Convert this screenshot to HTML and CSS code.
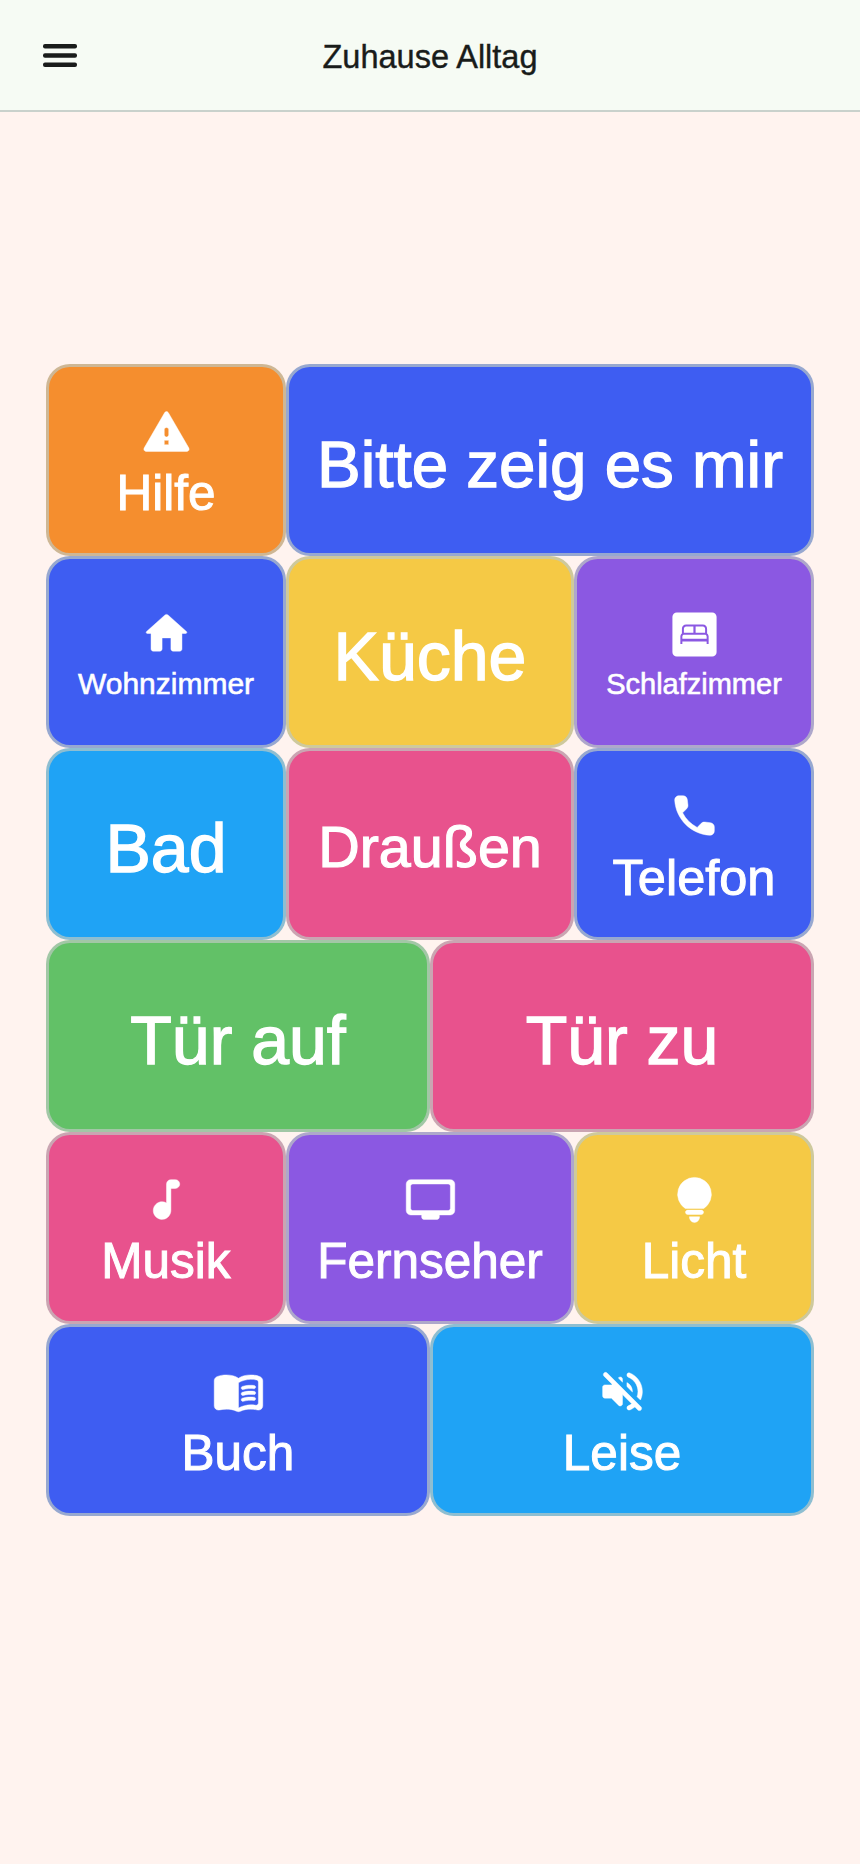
FILE: index.html
```html
<!DOCTYPE html>
<html lang="de">

<head>
  <meta charset="UTF-8">
  <meta name="viewport" content="width=device-width, initial-scale=1.0">
  <title>Zuhause Alltag</title>
  <link rel="stylesheet" href="styles.css">
</head>

<body>
  <header class="topbar">
    <button type="button" class="topbar__menu" aria-label="Menü">
      <svg viewBox="0 0 34 23"><rect width="34" height="4.500" rx="2"/><rect y="9.250" width="34" height="4.500" rx="2"/><rect y="18.500" width="34" height="4.500" rx="2"/></svg>
    </button>
    <h1 class="topbar__title">Zuhause Alltag</h1>
  </header>

  <main class="board">
    <button type="button" class="tile tile--orange span-5">
      <svg viewBox="0 0 24 24"><path d="M2.730 21h18.530c.770 0 1.250-.830.870-1.500l-9.270-16c-.390-.670-1.350-.670-1.730 0l-9.270 16c-.380.670.100 1.500.870 1.500zM13 18h-2v-2h2v2zm-1-3.500c-.550 0-1-.450-1-1v-2.300c0-.550.450-1 1-1s1 .450 1 1v2.300c0 .550-.450 1-1 1z"/></svg>
      <span>Hilfe</span>
    </button>
    <button type="button" class="tile tile--blue span-11 label-wide"><span>Bitte zeig es mir</span></button>

    <button type="button" class="tile tile--blue span-5 label-sm">
      <svg viewBox="0 0 24 24"><path d="M10 19v-5h4v5c0 .550.450 1 1 1h3c.550 0 1-.450 1-1v-7h1.700c.460 0 .680-.570.330-.870L12.670 3.600c-.380-.340-.960-.340-1.340 0l-8.360 7.530c-.340.300-.130.870.330.870H5v7c0 .550.450 1 1 1h3c.550 0 1-.450 1-1z"/></svg>
      <span>Wohnzimmer</span>
    </button>
    <button type="button" class="tile tile--yellow span-6 label-xl"><span>Küche</span></button>
    <button type="button" class="tile tile--purple span-5 label-xs">
      <svg class="icon-cut" viewBox="0 0 24 24"><path fill-rule="evenodd" d="M4 2h16c1.100 0 2 .900 2 2v16c0 1.100-.900 2-2 2H4c-1.100 0-2-.900-2-2V4c0-1.100.900-2 2-2zM8.200 7.500c-1.100 0-1.900.800-1.900 1.900v2.100c-.400.300-.700.800-.700 1.400v3.400h.900v-1.100h11v1.100h.900v-3.400c0-.600-.300-1.100-.700-1.400V9.400c0-1.100-.800-1.900-1.900-1.900H8.200zm-1 3.700V9.400c0-.500.400-1 1-1h3.300v2.800H7.200zm5.300 0V8.400h3.300c.600 0 1 .500 1 1v1.800h-4.300zM6.500 13.900v-1c0-.500.400-.800.800-.800h9.400c.400 0 .800.300.800.800v1h-11z"/></svg>
      <span>Schlafzimmer</span>
    </button>

    <button type="button" class="tile tile--sky span-5 label-xl"><span>Bad</span></button>
    <button type="button" class="tile tile--pink span-6 label-lg"><span>Draußen</span></button>
    <button type="button" class="tile tile--blue span-5 label-md">
      <svg viewBox="0 0 24 24"><path d="M19.230 15.260l-2.540-.290c-.610-.070-1.210.140-1.640.570l-1.840 1.840c-2.830-1.440-5.150-3.750-6.590-6.590l1.850-1.850c.430-.430.640-1.030.570-1.640l-.290-2.520c-.120-1.010-.970-1.770-1.990-1.770H5.030c-1.130 0-2.070.940-2 2.070.530 8.540 7.360 15.360 15.890 15.890 1.130.070 2.070-.870 2.070-2v-1.730c.010-1.010-.750-1.860-1.760-1.980z"/></svg>
      <span>Telefon</span>
    </button>

    <button type="button" class="tile tile--green span-8 label-xl"><span>Tür auf</span></button>
    <button type="button" class="tile tile--pink span-8 label-xl"><span>Tür zu</span></button>

    <button type="button" class="tile tile--pink span-5">
      <svg viewBox="0 0 24 24"><path d="M12 5v8.550c-.940-.540-2.100-.750-3.330-.320-1.340.480-2.370 1.670-2.610 3.070-.460 2.740 1.860 5.080 4.590 4.650 1.960-.310 3.350-2.110 3.350-4.100V7h2c1.100 0 2-.900 2-2s-.900-2-2-2h-2c-1.100 0-2 .900-2 2z"/></svg>
      <span>Musik</span>
    </button>
    <button type="button" class="tile tile--purple span-6">
      <svg viewBox="0 0 24 24"><path d="M21 3H3c-1.100 0-2 .900-2 2v12c0 1.100.900 2 2 2h5v1c0 .550.450 1 1 1h6c.550 0 1-.450 1-1v-1h5c1.100 0 1.990-.900 1.990-2L23 5c0-1.100-.900-2-2-2zm-1 14H4c-.550 0-1-.450-1-1V6c0-.550.450-1 1-1h16c.550 0 1 .450 1 1v10c0 .550-.450 1-1 1z"/></svg>
      <span>Fernseher</span>
    </button>
    <button type="button" class="tile tile--yellow span-5">
      <svg viewBox="0 0 24 24"><path d="M12 2a7.650 7.650 0 0 1 4.200 14.050H7.800A7.650 7.650 0 0 1 12 2zM8.900 16.800h6.200c.550 0 1 .450 1 1s-.450 1-1 1H8.900c-.550 0-1-.450-1-1s.450-1 1-1zM9.700 19.800h4.600c0 1.400-1 2.600-2.300 2.600s-2.300-1.200-2.300-2.600z"/></svg>
      <span>Licht</span>
    </button>

    <button type="button" class="tile tile--blue span-8">
      <svg viewBox="0 0 24 24"><path fill-rule="evenodd" d="M17.500 4.500c-1.950 0-4.050.400-5.500 1.500-1.450-1.100-3.550-1.500-5.500-1.500-1.450 0-2.990.220-4.280.790C1.490 5.620 1 6.330 1 7.140v11.280c0 1.300 1.220 2.260 2.480 1.940.980-.250 2.020-.360 3.020-.360 1.560 0 3.220.260 4.560.920.600.300 1.280.300 1.870 0 1.340-.670 3-.920 4.560-.920 1 0 2.040.110 3.020.360 1.260.330 2.480-.630 2.480-1.940V7.140c0-.810-.490-1.520-1.220-1.850-1.280-.570-2.820-.790-4.270-.790zM21 17.230c0 .630-.580 1.090-1.200.980-.750-.140-1.530-.200-2.300-.200-1.700 0-4.150.650-5.500 1.500V8c1.350-.850 3.800-1.500 5.500-1.500.920 0 1.830.090 2.700.280.460.100.800.510.800.980v9.470z"/><path d="M13.980 11.170c-.320 0-.610-.200-.710-.520-.130-.390.090-.820.480-.940 1.540-.500 3.530-.660 5.360-.450.410.050.710.420.660.830-.050.410-.420.710-.830.660-1.620-.190-3.390-.040-4.730.390-.080.010-.160.030-.230.030zM13.980 13.830c-.320 0-.610-.200-.710-.520-.130-.390.090-.820.480-.940 1.530-.500 3.530-.660 5.360-.450.410.050.710.420.660.830-.050.410-.420.710-.830.660-1.620-.190-3.390-.040-4.730.390-.080.010-.160.030-.230.030zM13.980 16.490c-.320 0-.610-.200-.710-.520-.130-.390.090-.820.480-.940 1.530-.500 3.530-.660 5.360-.450.410.050.710.420.660.830-.050.410-.420.710-.830.660-1.620-.190-3.390-.040-4.730.390-.080.010-.160.030-.230.030z"/></svg>
      <span>Buch</span>
    </button>
    <button type="button" class="tile tile--sky span-8">
      <svg viewBox="0 0 24 24"><path d="M3.630 3.630c-.390.390-.390 1.020 0 1.410L7.290 8.700 7 9H4c-.550 0-1 .450-1 1v4c0 .550.450 1 1 1h3l3.290 3.290c.630.630 1.710.180 1.710-.710v-4.170l4.180 4.180c-.490.370-1.020.680-1.600.910-.360.150-.580.530-.580.920 0 .720.730 1.180 1.390.910.800-.330 1.550-.770 2.220-1.310l1.340 1.340c.390.390 1.020.390 1.410 0 .390-.390.390-1.020 0-1.410L5.050 3.630c-.390-.390-1.020-.390-1.420 0zM19 12c0 .820-.150 1.610-.410 2.340l1.530 1.530c.560-1.170.880-2.480.880-3.870 0-3.830-2.400-7.110-5.780-8.400-.590-.230-1.220.230-1.220.860v.190c0 .380.250.710.610.850C17.180 6.540 19 9.060 19 12zm-8.710-6.290l-.170.170L12 7.760V6.410c0-.890-1.080-1.330-1.710-.700zM16.500 12c0-1.770-1.020-3.290-2.500-4.030v1.790l2.480 2.480c.010-.080.020-.160.020-.240z"/></svg>
      <span>Leise</span>
    </button>
  </main>
</body>

</html>
```
FILE: styles.css
```css
* {
  box-sizing: border-box;
}

body {
  margin: 0;
  min-height: 100vh;
  background-color: #fff3ef;
  font-family: "Liberation Sans", Arial, sans-serif;
}

.topbar {
  display: flex;
  align-items: center;
  justify-content: center;
  position: relative;
  height: 112px;
  padding-top: 5px;
  background-color: #f6fbf4;
  border-bottom: 2px solid #c9d1cc;
}

.topbar__menu {
  position: absolute;
  left: 43px;
  top: 44px;
  width: 34px;
  height: 23px;
  padding: 0;
  border: none;
  background: none;
  fill: #191c1a;
}

.topbar__menu svg {
  display: block;
  width: 100%;
  height: 100%;
}

.topbar__title {
  margin: 0;
  font-size: 32.500px;
  font-weight: normal;
  color: #191c1a;
  -webkit-text-stroke: .4px #191c1a;
}

.board {
  display: grid;
  grid-template-columns: repeat(16, 1fr);
  grid-auto-rows: 192px;
  padding: 252px 46px 0;
}

.tile {
  display: flex;
  flex-direction: column;
  align-items: center;
  justify-content: center;
  gap: 7px;
  padding: .15em 0 0;
  border: 3px solid rgba(190, 201, 194, .7);
  border-radius: 24px;
  color: #fff;
  fill: #fff;
  font-family: inherit;
  font-size: 49.500px;
  line-height: 1.15;
  -webkit-text-stroke: .02em #fff;
}

.tile svg {
  display: block;
  width: 53px;
  height: 53px;
  stroke: #fff;
  stroke-width: .2;
}

.tile svg.icon-cut {
  stroke: none;
}

.label-xs {
  font-size: 29px;
}

.label-sm {
  font-size: 30px;
}

.label-md {
  font-size: 50.500px;
}

.label-lg {
  font-size: 57.500px;
  padding-top: .12em;
}

.label-wide {
  font-size: 65.500px;
}

.label-xl {
  font-size: 68px;
  padding-top: .12em;
}

.span-5 {
  grid-column: span 5;
}

.span-6 {
  grid-column: span 6;
}

.span-8 {
  grid-column: span 8;
}

.span-11 {
  grid-column: span 11;
}

.tile--orange {
  background-color: #f58e2e;
}

.tile--blue {
  background-color: #3e5df2;
}

.tile--yellow {
  background-color: #f5c945;
}

.tile--purple {
  background-color: #8b58e2;
}

.tile--sky {
  background-color: #1fa3f5;
}

.tile--pink {
  background-color: #e8528d;
}

.tile--green {
  background-color: #62c167;
}
```
